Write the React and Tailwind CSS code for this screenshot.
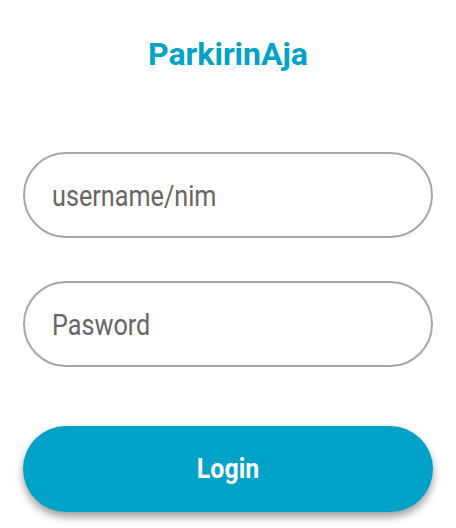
export default function App() {
  return (
    <div className="w-[456px] h-[528px] bg-white flex flex-col items-center" style={{ fontFamily: "Roboto, sans-serif" }}>
      <h1 className="mt-[32px] text-[32px] leading-[44px] font-bold text-[#00a2c7]">ParkirinAja</h1>
      <div className="mt-[76px] w-[410px] h-[86px] rounded-full border-2 border-[#a6a6a6] flex items-center pl-[27px]">
        <span className="inline-block text-[30px] text-[#666666] origin-left scale-x-[0.84]">username/nim</span>
      </div>
      <div className="mt-[43px] w-[410px] h-[86px] rounded-full border-2 border-[#a6a6a6] flex items-center pl-[27px]">
        <span className="inline-block text-[30px] text-[#666666] origin-left scale-x-[0.84]">Pasword</span>
      </div>
      <button className="mt-[59px] w-[410px] h-[86px] rounded-full bg-[#00a2c7] text-white shadow-[0_5px_9px_rgba(0,0,0,0.38)] flex items-center justify-center">
        <span className="inline-block text-[28px] font-bold scale-x-[0.89]">Login</span>
      </button>
    </div>
  );
}
